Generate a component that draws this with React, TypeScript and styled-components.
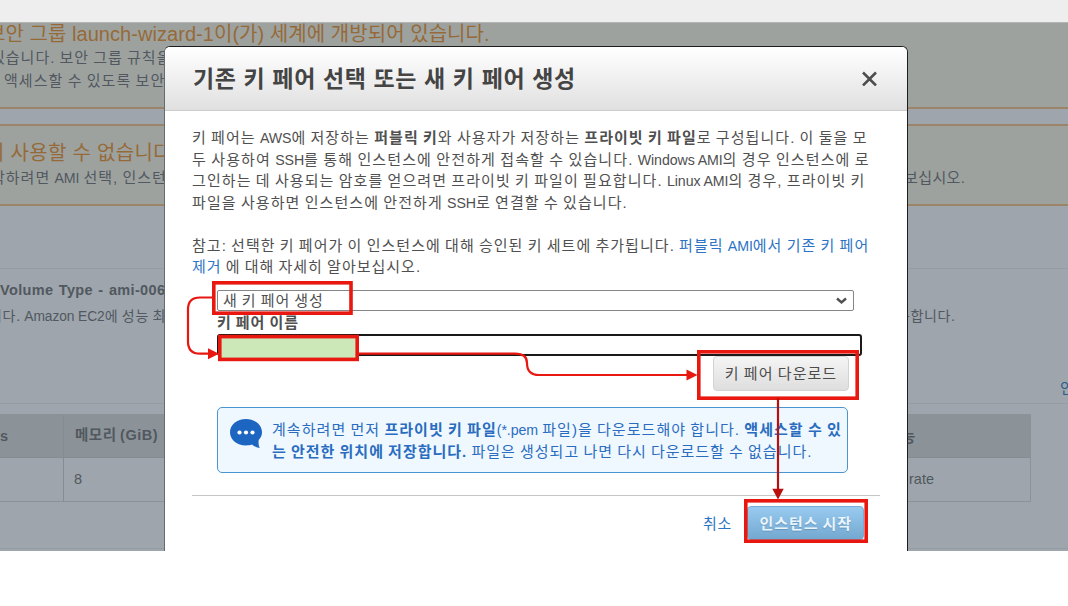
import styled, { createGlobalStyle } from 'styled-components';

const GlobalStyle = createGlobalStyle`
    *, *::before, *::after {
        box-sizing: border-box;
    }

    body {
        margin: 0;
        background-color: #fff;
        font-family: 'Liberation Sans', 'Noto Sans CJK KR', sans-serif;
        color: #505050;
    }
`;

const Page = styled.div`
    position: relative;
    width: 1068px;
    height: 606px;
    overflow: hidden;
    display: flex;
    flex-direction: column;
`;

const TopBar = styled.div`
    height: 23px;
    flex-shrink: 0;
    background-color: #eee;
    border-bottom: 1px solid #b3b5b5;
`;

const Backdrop = styled.main`
    height: 528px;
    flex-shrink: 0;
    overflow: hidden;
    display: flex;
    flex-direction: column;
    background-color: #9ea5ac;
    color: #51585f;
`;

// Text that keeps to one line.

const Line = styled.div<{ $size?: number; $spacing?: number; $height?: number }>`
    height: ${({ $height = 21.6 }) => $height}px;
    line-height: ${({ $height = 21.6 }) => $height}px;
    font-size: ${({ $size = 15 }) => $size}px;
    letter-spacing: ${({ $spacing = 1.06 }) => $spacing}px;
    word-spacing: -1px;
    white-space: nowrap;
`;

// Latin words run smaller and tighter than the Korean around them.

const En = styled.span<{ $size?: number }>`
    font-size: ${({ $size = 14.2 }) => $size}px;
    letter-spacing: -0.1px;
    word-spacing: 0;
`;

// Backdrop.

const FirstAlert = styled.section`
    height: 86px;
    flex-shrink: 0;
    background-color: #9da29f;
    border-bottom: 2px solid #9b8467;
`;

const SecondAlert = styled.section`
    height: 82px;
    flex-shrink: 0;
    margin-top: 15px;
    padding-top: 15px;
    background-color: #9da29f;
    border-top: 2px solid #9b8467;
    border-bottom: 2px solid #9b8467;
`;

const AlertTitle = styled(Line)`
    color: #966a38;
    word-spacing: 0;
`;

const Shift = styled.span<{ $x: number }>`
    display: inline-block;
    margin-left: ${({ $x }) => $x}px;
`;

const SplitRow = styled.div`
    display: grid;
    grid-template-columns: 904px 1fr;
`;

const AmiSection = styled.section`
    height: 136px;
    flex-shrink: 0;
    margin-top: 62px;
    padding-top: 9px;
    border-top: 1px solid #959ca3;
    border-bottom: 1px solid #959ca3;
`;

const AmiName = styled(Line)`
    font-weight: bold;
    word-spacing: 1px;
`;

const EditLink = styled(Line)`
    margin-top: 48px;
    padding-left: 1060px;
    color: #2c5d8c;
`;

const Table = styled.div`
    width: 1031px;
    flex-shrink: 0;
    margin-top: 10px;
    border: 1px solid #8b9298;
    border-left: none;
`;

const TableRow = styled.div<{ $head?: boolean }>`
    display: grid;
    grid-template-columns: 64px 834px 1fr;
    height: 43px;
    align-items: center;
    font-size: 14.5px;
    font-weight: ${({ $head }) => ($head ? 'bold' : 'normal')};
    background-color: ${({ $head }) => ($head ? '#8c9398' : 'transparent')};
    border-bottom: ${({ $head }) => ($head ? '1px solid #858c92' : 'none')};
`;

const Cell = styled.div<{ $pad?: number; $divider?: boolean }>`
    height: 100%;
    display: flex;
    align-items: center;
    padding-left: ${({ $pad = 0 }) => $pad}px;
    padding-bottom: 1px;
    border-right: ${({ $divider }) => ($divider ? '1px solid #858c92' : 'none')};
`;

const PanelEnd = styled.div`
    margin-top: 46px;
    border-top: 1px solid #959ca3;
`;

// Dialog.

const Dialog = styled.section`
    position: absolute;
    left: 164px;
    top: 46px;
    width: 744px;
    height: 505px;
    overflow: hidden;
    background-color: #fff;
    border: 1px solid #1d1d1d;
    border-left-color: #666b70;
    border-bottom: none;
    border-radius: 6px 6px 0 0;
`;

const DialogHeader = styled.header`
    height: 64px;
    display: flex;
    align-items: center;
    justify-content: space-between;
    padding: 0 30px 0 28px;
    background: linear-gradient(#fff, #e0e0e0);
    border-bottom: 1px solid #ccc;
`;

const Title = styled.h1`
    margin: 0;
    font-size: 23px;
    line-height: 30px;
    letter-spacing: 0.62px;
    white-space: nowrap;
    color: #444;
`;

const DialogBody = styled.div`
    padding: 16px 27px 0;
`;

const Paragraph = styled.div`
    margin-bottom: 21.4px;
`;

const Link = styled.span`
    color: #2d73c5;
`;

const Form = styled.div`
    display: flex;
    flex-direction: column;
    margin: -9px 0 0 25px;
`;

const Select = styled.div`
    width: 637px;
    height: 21px;
    display: flex;
    align-items: center;
    justify-content: space-between;
    padding: 0 5px;
    border: 1px solid #858585;
    border-radius: 2px;
`;

const Label = styled(Line)`
    font-weight: bold;
`;

const NameField = styled.div`
    width: 645px;
    height: 22px;
    border: 2px solid #1a1a1a;
    border-radius: 3px;
    padding: 1px 2px;
`;

const NameValue = styled.div`
    width: 137px;
    height: 22px;
    background-color: #cce8b8;
`;

const DownloadButton = styled.button`
    align-self: flex-start;
    width: 136px;
    height: 35px;
    margin-left: 496px;
    padding: 0;
    border: 1px solid #d2d2d2;
    border-radius: 4px;
    background: linear-gradient(#f5f5f5, #dedede);
    color: #4c4c4c;
    font-family: inherit;
`;

const InfoBox = styled.div`
    width: 631px;
    height: 66px;
    display: flex;
    gap: 10px;
    margin-top: 16px;
    padding: 11px 0 0 12px;
    border: 1px solid #4a94d0;
    border-radius: 5px;
    background-color: #f0f8ff;
    color: #2a6dc0;
`;

const Footer = styled.footer`
    display: flex;
    align-items: center;
    height: 55px;
    margin: 22px 0 0;
    padding-left: 511px;
    border-top: 1px solid #c6c6c6;
    width: 688px;
    gap: 15px;
`;

const LaunchButton = styled.button`
    width: 117px;
    height: 34px;
    padding: 0;
    border: 1px solid #78acd4;
    border-radius: 4px;
    background: linear-gradient(#99cbf0, #74a8d0);
    color: #eaf4fc;
    font-family: inherit;
    font-weight: bold;
    text-shadow: 0 1px 1px #6596bd;
`;

const Annotations = styled.svg`
    position: absolute;
    left: 0;
    top: 0;
    pointer-events: none;
`;

const CloseIcon = () => (
    <svg width="15" height="15" viewBox="0 0 15 15">
        <path d="M1 1.500L14 14.500M14 1.500L1 14.500" stroke="#4c4c4c" strokeWidth="2.500" fill="none" />
    </svg>
);

const BubbleIcon = () => (
    <svg width="32" height="31" viewBox="0 0 32 31">
        <path
            d="M16 0C7 0 0 5.800 0 13.300C0 21 7 26.500 16 26.500C18.200 26.500 20.300 26.300 22 25.600C24 27.500 26.500 28.500 29.700 29C28.500 26.500 28.400 24 28.700 21C30.800 19 32 16.300 32 13.300C32 5.800 25 0 16 0Z"
            fill="#1c65c1"
        />
        <circle cx="9.500" cy="13.500" r="2.100" fill="#fff" />
        <circle cx="16" cy="13.500" r="2.100" fill="#fff" />
        <circle cx="22.500" cy="13.500" r="2.100" fill="#fff" />
    </svg>
);

const App = () => {
    return (
        <Page>
            <GlobalStyle />
            <TopBar />
            <Backdrop>
                <FirstAlert>
                    <AlertTitle $size={20} $height={23} $spacing={0.05}>
                        <Shift $x={-13}>보안 그룹 launch-wizard-1이(가) 세계에 개방되어 있습니다.</Shift>
                    </AlertTitle>
                    <Line $height={24} $spacing={1}>
                        <Shift $x={-9}>있습니다. 보안 그룹 규칙을</Shift>
                    </Line>
                    <Line>
                        <Shift $x={4}>액세스할 수 있도록 보안</Shift>
                    </Line>
                </FirstAlert>
                <SecondAlert>
                    <AlertTitle $size={20} $height={25} $spacing={0.3}>
                        <Shift $x={-14}>이 사용할 수 없습니다</Shift>
                    </AlertTitle>
                    <SplitRow>
                        <Line $height={23} $spacing={1}>
                            <Shift $x={-9}>
                                작하려면 <En>AMI</En> 선택, 인스턴
                            </Shift>
                        </Line>
                        <Line $height={23} $spacing={0.4}>보십시오.</Line>
                    </SplitRow>
                </SecondAlert>
                <AmiSection>
                    <AmiName $size={14.5} $height={24} $spacing={0.35}>Volume Type - ami-006</AmiName>
                    <SplitRow>
                        <Line $size={14} $height={28} $spacing={0.7}>
                            <Shift $x={-11}>
                                니다. <En $size={13.8}>Amazon EC2</En>에 성능 최
                            </Shift>
                        </Line>
                        <Line $size={14} $height={28} $spacing={0.6}>
                            <Shift $x={-7}>공합니다.</Shift>
                        </Line>
                    </SplitRow>
                    <EditLink>인</EditLink>
                </AmiSection>
                <Table>
                    <TableRow $head>
                        <Cell $divider>s</Cell>
                        <Cell $pad={11}>
                            <Line $size={14.5} $spacing={0.5}>메모리 (GiB)</Line>
                        </Cell>
                        <Cell $pad={4}>능</Cell>
                    </TableRow>
                    <TableRow>
                        <Cell $divider />
                        <Cell $pad={10}>8</Cell>
                        <Cell $pad={11}>rate</Cell>
                    </TableRow>
                </Table>
                <PanelEnd />
            </Backdrop>

            <Dialog>
                <DialogHeader>
                    <Title>기존 키 페어 선택 또는 새 키 페어 생성</Title>
                    <CloseIcon />
                </DialogHeader>
                <DialogBody>
                    <Paragraph>
                        <Line $spacing={1.06}>
                            키 페어는 <En>AWS</En>에 저장하는 <b>퍼블릭 키</b>와 사용자가 저장하는 <b>프라이빗 키 파일</b>로 구성됩니다. 이 둘을 모
                        </Line>
                        <Line $spacing={1.12}>
                            두 사용하여 <En>SSH</En>를 통해 인스턴스에 안전하게 접속할 수 있습니다. <En>Windows AMI</En>의 경우 인스턴스에 로
                        </Line>
                        <Line $spacing={1.08}>
                            그인하는 데 사용되는 암호를 얻으려면 프라이빗 키 파일이 필요합니다. <En>Linux AMI</En>의 경우, 프라이빗 키
                        </Line>
                        <Line $spacing={1.08}>
                            파일을 사용하면 인스턴스에 안전하게 <En>SSH</En>로 연결할 수 있습니다.
                        </Line>
                    </Paragraph>
                    <Paragraph>
                        <Line $spacing={1.04}>
                            참고: 선택한 키 페어가 이 인스턴스에 대해 승인된 키 세트에 추가됩니다.{' '}
                            <Link>
                                퍼블릭 <En>AMI</En>에서 기존 키 페어
                            </Link>
                        </Line>
                        <Line $spacing={1}>
                            <Link>제거</Link> 에 대해 자세히 알아보십시오.
                        </Line>
                    </Paragraph>
                    <Form>
                        <Select>
                            <Line $height={19} $spacing={0.95}>새 키 페어 생성</Line>
                            <svg width="13" height="8" viewBox="0 0 13 8">
                                <path d="M2 1.500L6.500 5.500L11 1.500" stroke="#505050" strokeWidth="2.400" fill="none" />
                            </svg>
                        </Select>
                        <Label $height={23} $spacing={0.95}>키 페어 이름</Label>
                        <NameField>
                            <NameValue />
                        </NameField>
                        <DownloadButton>
                            <Line>키 페어 다운로드</Line>
                        </DownloadButton>
                        <InfoBox>
                            <BubbleIcon />
                            <div>
                                <Line $spacing={1.05}>
                                    계속하려면 먼저 <b>프라이빗 키 파일</b>
                                    <En>(*.pem</En> 파일)을 다운로드해야 합니다. <b>액세스할 수 있</b>
                                </Line>
                                <Line $spacing={1}>
                                    <b>는 안전한 위치에 저장합니다.</b> 파일은 생성되고 나면 다시 다운로드할 수 없습니다.
                                </Line>
                            </div>
                        </InfoBox>
                    </Form>
                    <Footer>
                        <Line $spacing={0.8}>
                            <Link>취소</Link>
                        </Line>
                        <LaunchButton>
                            <Line $spacing={0.95}>인스턴스 시작</Line>
                        </LaunchButton>
                    </Footer>
                </DialogBody>
            </Dialog>

            {/* Step marks drawn over the dialog */}
            <Annotations width="1068" height="606" viewBox="0 0 1068 606" fill="none">
                <g stroke="#e81710" strokeWidth="3.600">
                    <rect x="213.800" y="282.800" width="137.200" height="30.400" />
                    <rect x="219.800" y="336.600" width="137.400" height="22.800" />
                    <rect x="698.800" y="351.800" width="158.400" height="46.400" />
                    <rect x="745.800" y="500.800" width="120.400" height="40.400" />
                </g>
                <g stroke="#e81710" strokeWidth="2.200">
                    <path d="M212 297.500H200Q188 297.500 188 309.500V341.500Q188 353.700 200 353.700H209" />
                    <path d="M359 353.700H515Q527 353.700 527 363Q527 375 539 375H688" />
                </g>
                <path d="M208 348.200L219 353.700L208 359.200ZM686.500 369.500L697.500 375L686.500 380.500Z" fill="#e81710" />
                <path d="M778 398V490" stroke="#b90f0d" strokeWidth="2.200" />
                <path d="M772.300 488.800H783.700L778 499.500Z" fill="#b90f0d" />
            </Annotations>
        </Page>
    );
};

export default App;
